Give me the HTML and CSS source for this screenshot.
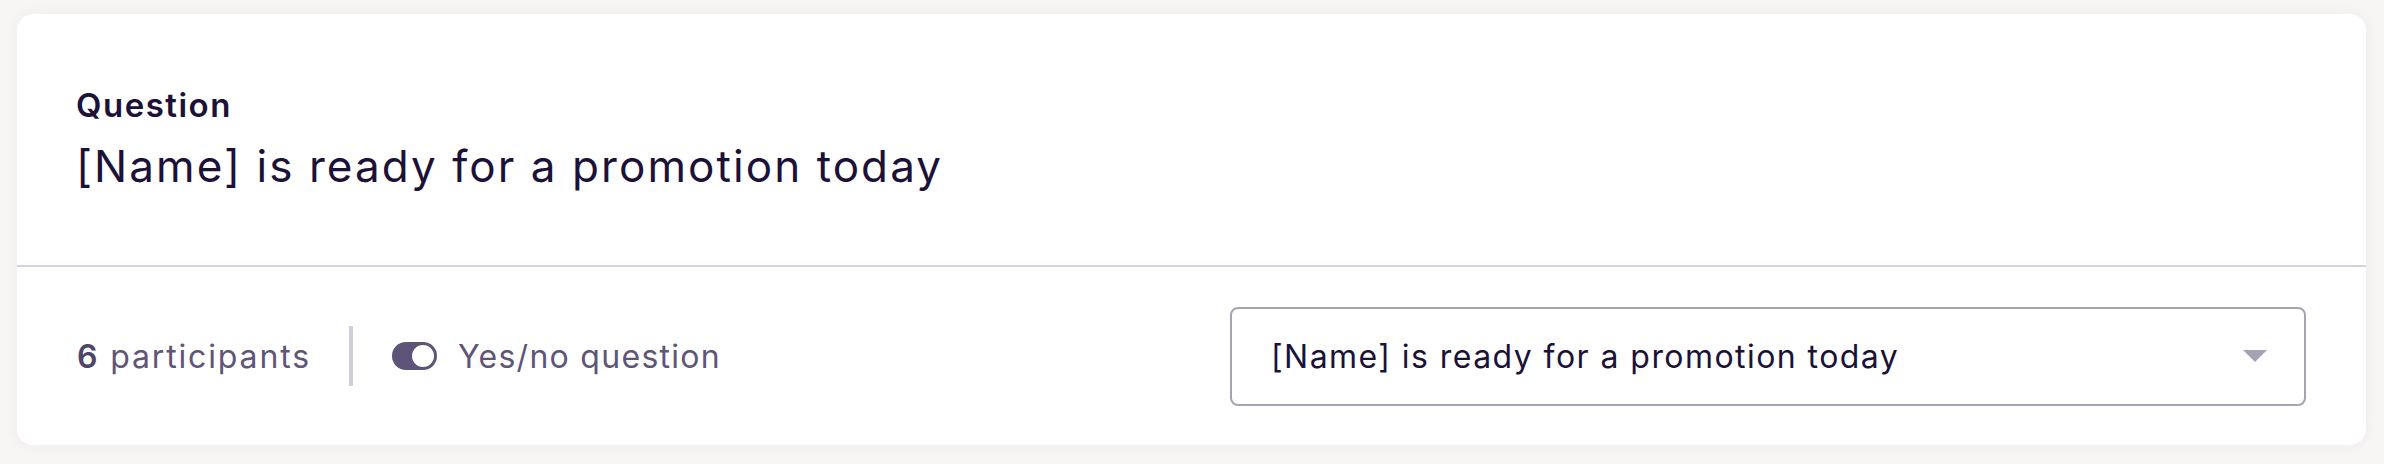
FILE: index.html
```html
<!DOCTYPE html>
<html lang="en">
<head>
    <meta charset="UTF-8">
    <meta name="viewport" content="width=device-width, initial-scale=1.0">
    <title>Question</title>
    <link rel="stylesheet" href="styles.css">
</head>
<body>
    <div class="card">
        <div class="card-header">
            <div class="label">Question</div>
            <div class="title">[Name] is ready for a promotion today</div>
        </div>
        <div class="card-footer">
            <div class="meta">
                <span class="count"><b>6</b> participants</span>
                <span class="sep"></span>
                <span class="toggle"><span class="knob"></span></span>
                <span class="toggle-label">Yes/no question</span>
            </div>
            <div class="select">
                <span class="select-text">[Name] is ready for a promotion today</span>
                <span class="caret"></span>
            </div>
        </div>
    </div>
</body>
</html>
```

FILE: styles.css
```css
* {
    margin: 0;
    padding: 0;
    box-sizing: border-box;
}
body {
    font-family: 'Inter', 'Lato', sans-serif;
    background: #f8f6f5;
    color: #1c1238;
    padding: 14px 18px 19px 17px;
}
.card {
    background: #fff;
    border-radius: 16px;
    box-shadow: 0 0 14px rgba(40, 30, 60, 0.05);
}
.card-header {
    height: 253px;
    padding: 73px 60px 0 59px;
    border-bottom: 2px solid #d3d1de;
}
.label {
    font-size: 33px;
    line-height: 36px;
    font-weight: 600;
    letter-spacing: 0.045em;
}
.title {
    font-size: 44px;
    line-height: 50px;
    letter-spacing: 0.047em;
    margin-top: 18px;
}
.card-footer {
    height: 178px;
    padding: 0 60px;
    display: flex;
    align-items: center;
    justify-content: space-between;
}
.meta {
    display: flex;
    align-items: center;
    color: #5f5578;
    font-size: 32px;
    letter-spacing: 0.058em;
}
.count b {
    font-weight: 600;
    color: #4f4569;
}
.sep {
    width: 4px;
    height: 60px;
    background: #cfcdd9;
    margin: 0 39px 0 38px;
}
.toggle {
    width: 45px;
    height: 28px;
    border-radius: 14px;
    background: #5e5478;
    display: flex;
    align-items: center;
    justify-content: flex-end;
    padding: 0 3px;
}
.knob {
    width: 22px;
    height: 22px;
    border-radius: 50%;
    background: #fff;
}
.toggle-label {
    margin-left: 21px;
    letter-spacing: 0.04em;
}
.select {
    width: 1076px;
    height: 99px;
    border: 2px solid #a6a3b5;
    border-radius: 8px;
    display: flex;
    align-items: center;
    justify-content: space-between;
    padding: 0 37px 0 39px;
    font-size: 32px;
    letter-spacing: 0.045em;
}
.caret {
    width: 0;
    height: 0;
    border-left: 12px solid transparent;
    border-right: 12px solid transparent;
    border-top: 12px solid #a6a1b4;
}
```
